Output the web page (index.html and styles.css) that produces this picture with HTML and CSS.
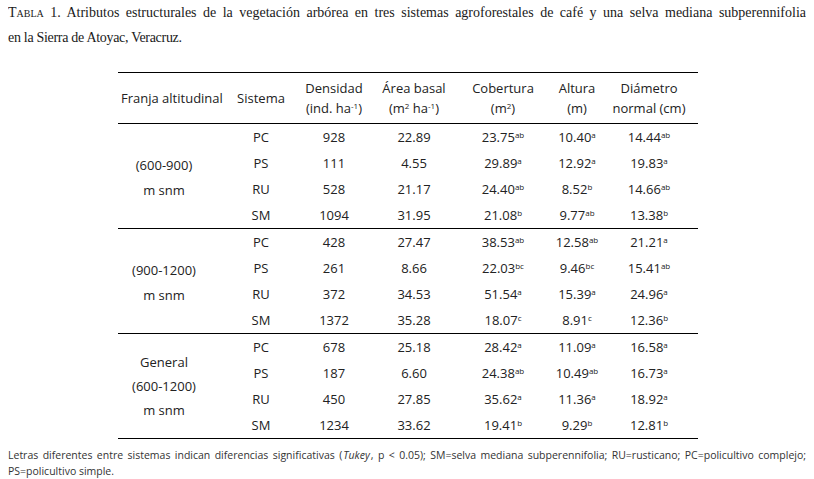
FILE: index.html
```html
<!DOCTYPE html>
<html lang="es">
<head>
<meta charset="utf-8">
<title>Tabla 1</title>
<link rel="stylesheet" href="styles.css">
</head>
<body>
<p class="caption"><span class="line first"><span class="sc">Tabla 1.</span> Atributos estructurales de la vegetación arbórea en tres sistemas agroforestales de café y una selva mediana subperennifolia</span> <span class="line">en la Sierra de Atoyac, Veracruz.</span></p>

<table class="data">
  <colgroup>
    <col class="c1"><col class="c2"><col class="c3"><col class="c4"><col class="c5"><col class="c6"><col class="c7">
  </colgroup>
  <thead>
    <tr>
      <th class="franja">Franja altitudinal</th>
      <th>Sistema</th>
      <th>Densidad<br>(ind. ha<sup>-1</sup>)</th>
      <th>Área basal<br>(m<sup>2</sup> ha<sup>-1</sup>)</th>
      <th>Cobertura<br>(m<sup>2</sup>)</th>
      <th>Altura<br>(m)</th>
      <th>Diámetro<br>normal (cm)</th>
    </tr>
  </thead>
  <tbody>
    <tr><td class="label" rowspan="4">(600-900)<br>m snm</td><td>PC</td><td>928</td><td>22.89</td><td>23.75<sup>ab</sup></td><td>10.40<sup>a</sup></td><td>14.44<sup>ab</sup></td></tr>
    <tr><td>PS</td><td>111</td><td>4.55</td><td>29.89<sup>a</sup></td><td>12.92<sup>a</sup></td><td>19.83<sup>a</sup></td></tr>
    <tr><td>RU</td><td>528</td><td>21.17</td><td>24.40<sup>ab</sup></td><td>8.52<sup>b</sup></td><td>14.66<sup>ab</sup></td></tr>
    <tr><td>SM</td><td>1094</td><td>31.95</td><td>21.08<sup>b</sup></td><td>9.77<sup>ab</sup></td><td>13.38<sup>b</sup></td></tr>
  </tbody>
  <tbody>
    <tr><td class="label" rowspan="4">(900-1200)<br>m snm</td><td>PC</td><td>428</td><td>27.47</td><td>38.53<sup>ab</sup></td><td>12.58<sup>ab</sup></td><td>21.21<sup>a</sup></td></tr>
    <tr><td>PS</td><td>261</td><td>8.66</td><td>22.03<sup>bc</sup></td><td>9.46<sup>bc</sup></td><td>15.41<sup>ab</sup></td></tr>
    <tr><td>RU</td><td>372</td><td>34.53</td><td>51.54<sup>a</sup></td><td>15.39<sup>a</sup></td><td>24.96<sup>a</sup></td></tr>
    <tr><td>SM</td><td>1372</td><td>35.28</td><td>18.07<sup>c</sup></td><td>8.91<sup>c</sup></td><td>12.36<sup>b</sup></td></tr>
  </tbody>
  <tbody>
    <tr><td class="label tight" rowspan="4">General<br>(600-1200)<br>m snm</td><td>PC</td><td>678</td><td>25.18</td><td>28.42<sup>a</sup></td><td>11.09<sup>a</sup></td><td>16.58<sup>a</sup></td></tr>
    <tr><td>PS</td><td>187</td><td>6.60</td><td>24.38<sup>ab</sup></td><td>10.49<sup>ab</sup></td><td>16.73<sup>a</sup></td></tr>
    <tr><td>RU</td><td>450</td><td>27.85</td><td>35.62<sup>a</sup></td><td>11.36<sup>a</sup></td><td>18.92<sup>a</sup></td></tr>
    <tr><td>SM</td><td>1234</td><td>33.62</td><td>19.41<sup>b</sup></td><td>9.29<sup>b</sup></td><td>12.81<sup>b</sup></td></tr>
  </tbody>
</table>

<p class="note">Letras diferentes entre sistemas indican diferencias significativas (<em>Tukey</em>, p &lt; 0.05); SM=selva mediana subperennifolia; RU=rusticano; PC=policultivo complejo; PS=policultivo simple.</p>
</body>
</html>
```

FILE: styles.css
```css
html, body {
  background: #fff;
}
body {
  margin: 0 8px;
  color: #1e1e1e;
}
.caption {
  margin: 0;
  font-family: "Liberation Serif", "Times New Roman", serif;
  font-size: 14px;
  line-height: 25px;
  letter-spacing: -0.3px;
  color: #1a1a1a;
}
.caption .line {
  display: block;
}
.caption .first {
  text-align: justify;
  text-align-last: justify;
  letter-spacing: 0;
}
.sc {
  font-variant: small-caps;
}
.data {
  margin: 22px 0 0 110px;
  width: 580px;
  table-layout: fixed;
  border-collapse: collapse;
  font-family: "Open Sans", "DejaVu Sans", sans-serif;
  font-size: 13px;
  color: #222;
}
.c1 { width: 112px; }
.c2 { width: 62px; }
.c3 { width: 84px; }
.c4 { width: 76px; }
.c5 { width: 102px; }
.c6 { width: 46px; }
.c7 { width: 98px; }
.data thead {
  border-top: 1.5px solid #000;
  border-bottom: 1.5px solid #000;
}
.data th {
  font-weight: normal;
  line-height: 20px;
  padding: 5px 0;
  text-align: center;
  white-space: nowrap;
  vertical-align: middle;
}
.data th.franja {
  text-align: left;
  padding-left: 3px;
}
.data tbody {
  border-bottom: 1.5px solid #000;
}
.data td {
  height: 26px;
  padding: 0;
  line-height: 26px;
  text-align: center;
  white-space: nowrap;
}
.data td.label {
  line-height: 25px;
  padding-right: 20px;
  padding-top: 3px;
  vertical-align: middle;
}
.data td.label.tight {
  line-height: 24px;
  padding-top: 0;
}
.data sup {
  font-size: 8px;
  line-height: 0;
  vertical-align: 4px;
}
.note {
  margin: 8px 0 0;
  font-family: "Open Sans", "DejaVu Sans", sans-serif;
  font-size: 10.5px;
  line-height: 16px;
  color: #333;
  text-align: justify;
  text-align-last: left;
}
.note em {
  padding: 0 1px;
}
```
